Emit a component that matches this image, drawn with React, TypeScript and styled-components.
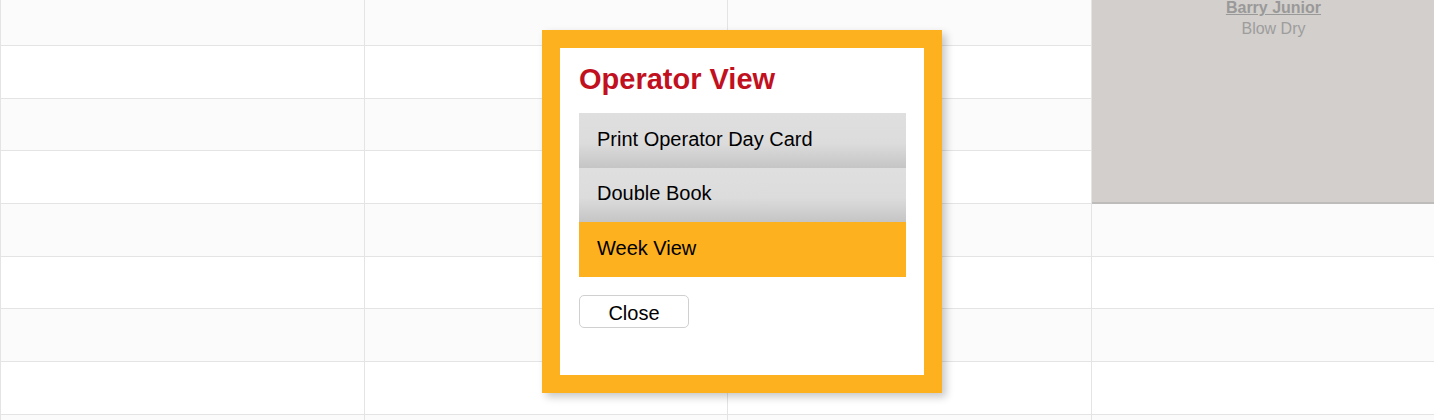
import React from "react";
import styled, { createGlobalStyle } from "styled-components";

const GlobalStyle = createGlobalStyle`
  html, body {
    margin: 0;
    padding: 0;
    background: #ffffff;
    overflow: hidden;
  }
  body {
    font-family: "Liberation Sans", Arial, Helvetica, sans-serif;
  }
`;

const Page = styled.div`
  position: relative;
  width: 1434px;
  height: 420px;
  overflow: hidden;
`;

const Calendar = styled.div`
  position: relative;
  display: flex;
  flex-direction: column;
  width: 1455px;
`;

const Row = styled.div<{ $shaded: boolean; $h: number }>`
  display: grid;
  grid-template-columns: 364px 363px 364px 364px;
  height: ${(p) => p.$h}px;
  box-sizing: border-box;
  border-bottom: 1px solid #e4e4e4;
  background: ${(p) => (p.$shaded ? "#fbfbfb" : "#ffffff")};
`;

const Cell = styled.div`
  border-left: 1px solid #e4e4e4;
`;

const Appointment = styled.div`
  position: absolute;
  left: 1092px;
  top: -7px;
  width: 363px;
  height: 211px;
  box-sizing: border-box;
  padding-top: 4px;
  background: #d3cfcc;
  border-bottom: 2px solid #bebcba;
  text-align: center;
  font-size: 16px;
  line-height: 21px;
  color: #9b9b9b;
`;

const ClientName = styled.a`
  display: block;
  font-weight: bold;
  color: #999999;
  text-decoration: underline;
`;

const Service = styled.div`
  color: #9d9d9d;
`;

const Modal = styled.div`
  position: absolute;
  left: 542px;
  top: 30px;
  width: 327px;
  height: 313px;
  border: 18px solid #fdb11f;
  background: #ffffff;
  box-shadow: 4px 4px 8px rgba(0, 0, 0, 0.22);
  padding: 14px 18px 0 19px;
  box-sizing: content-box;
  display: flex;
  flex-direction: column;
  align-items: flex-start;
`;

const Title = styled.h2`
  margin: 0 0 17px;
  font-size: 29px;
  line-height: 34px;
  font-weight: bold;
  color: #c1111f;
`;

const Menu = styled.ul`
  list-style: none;
  margin: 0;
  padding: 0;
  width: 327px;
  display: flex;
  flex-direction: column;
`;

const MenuItem = styled.li<{ $active?: boolean }>`
  height: 54.67px;
  box-sizing: border-box;
  padding: 14.5px 18px 0;
  font-size: 20px;
  line-height: 23px;
  color: #000000;
  background: ${(p) =>
    p.$active
      ? "#fdb11f"
      : "linear-gradient(to bottom, #dfdfdf 0%, #dcdcdc 55%, #c5c5c5 100%)"};
`;

const CloseButton = styled.button`
  margin-top: 18px;
  width: 110px;
  height: 33px;
  box-sizing: border-box;
  padding: 3px 0 0;
  border: 1px solid #d0d0d0;
  border-radius: 5px;
  background: #ffffff;
  font-family: "Liberation Sans", Arial, Helvetica, sans-serif;
  font-size: 20px;
  line-height: 28px;
  color: #000000;
`;

const rowHeights = [46, 53, 52, 53, 53, 52, 53, 53, 53];

export default function App() {
  return (
    <>
      <GlobalStyle />
      <Page>
        <Calendar>
          {rowHeights.map((h, i) => (
            <Row key={i} $h={h} $shaded={i % 2 === 0}>
              <Cell />
              <Cell />
              <Cell />
              <Cell />
            </Row>
          ))}
          <Appointment>
            <ClientName>Barry Junior</ClientName>
            <Service>Blow Dry</Service>
          </Appointment>
        </Calendar>
        <Modal>
          <Title>Operator View</Title>
          <Menu>
            <MenuItem>Print Operator Day Card</MenuItem>
            <MenuItem>Double Book</MenuItem>
            <MenuItem $active>Week View</MenuItem>
          </Menu>
          <CloseButton>Close</CloseButton>
        </Modal>
      </Page>
    </>
  );
}
